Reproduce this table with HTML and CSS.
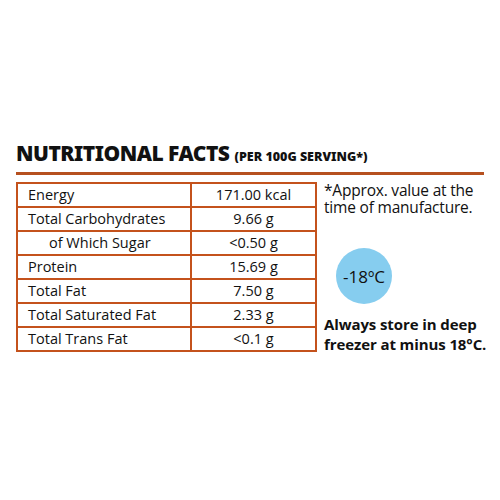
FILE: index.html
```html
<!DOCTYPE html>
<html lang="en">

<head>
  <meta charset="utf-8">
  <title>Nutritional Facts</title>
  <link rel="stylesheet" href="styles.css">
</head>

<body>
  <div class="panel">
    <header class="heading">
      <h1>NUTRITIONAL FACTS <span class="per">(PER 100G SERVING*)</span></h1>
    </header>

    <div class="content">
      <table class="facts">
        <colgroup>
          <col class="name-col">
          <col>
        </colgroup>
        <tr><td>Energy</td><td>171.00 kcal</td></tr>
        <tr><td>Total Carbohydrates</td><td>9.66 g</td></tr>
        <tr><td class="sub">of Which Sugar</td><td>&lt;0.50 g</td></tr>
        <tr><td>Protein</td><td>15.69 g</td></tr>
        <tr><td>Total Fat</td><td>7.50 g</td></tr>
        <tr><td>Total Saturated Fat</td><td>2.33 g</td></tr>
        <tr><td>Total Trans Fat</td><td>&lt;0.1 g</td></tr>
      </table>

      <aside class="notes">
        <p class="approx">*Approx. value at the time of manufacture.</p>
        <div class="temp">-18ºC</div>
        <p class="store">
          <span>Always store in deep</span>
          <span>freezer at minus 18°C.</span>
        </p>
      </aside>
    </div>
  </div>
</body>

</html>
```

FILE: styles.css
```css
body,
html {
  margin: 0;
  padding: 0;
  height: 100%;
  background-color: #ffffff;
  color: #111111;
  font-family: "Open Sans", "Noto Sans", sans-serif;
}

.panel {
  padding: 140px 16px 0 16px;
}

.heading {
  border-bottom: 3px solid #b6501f;
  padding-bottom: 2px;
}

h1 {
  margin: 0;
  font-family: "Noto Sans", "Liberation Sans", sans-serif;
  font-weight: 900;
  font-size: 21px;
  line-height: 26px;
  letter-spacing: -0.5px;
}

.per {
  font-size: 12.5px;
  letter-spacing: 0;
}

.content {
  display: flex;
  align-items: flex-start;
  gap: 7px;
  margin-top: 7px;
  margin-right: -12px;
}

.facts {
  width: 301px;
  table-layout: fixed;
  border-collapse: collapse;
  border: 2px solid #c4521c;
  font-size: 14.5px;
  flex-shrink: 0;
}

.name-col {
  width: 174px;
}

.facts td {
  border: 2px solid #c4521c;
  height: 22px;
  padding: 0 10px;
  line-height: 20px;
  white-space: nowrap;
}

.facts td:last-child {
  text-align: center;
}

.facts td.sub {
  padding-left: 31px;
}

.notes {
  display: flex;
  flex-direction: column;
  font-size: 15.5px;
  line-height: 17px;
}

.notes p {
  margin: 0;
}

.approx {
  width: 165px;
  letter-spacing: -0.2px;
}

.temp {
  width: 56px;
  height: 56px;
  border-radius: 50%;
  background-color: #86cdef;
  margin: 32px 0 0 12px;
  display: flex;
  align-items: center;
  justify-content: center;
  font-size: 17px;
}

.store {
  margin-top: 10px !important;
  display: flex;
  flex-direction: column;
  font-size: 15px;
  font-weight: bold;
  line-height: 20px;
  letter-spacing: -0.1px;
  white-space: nowrap;
}
```
